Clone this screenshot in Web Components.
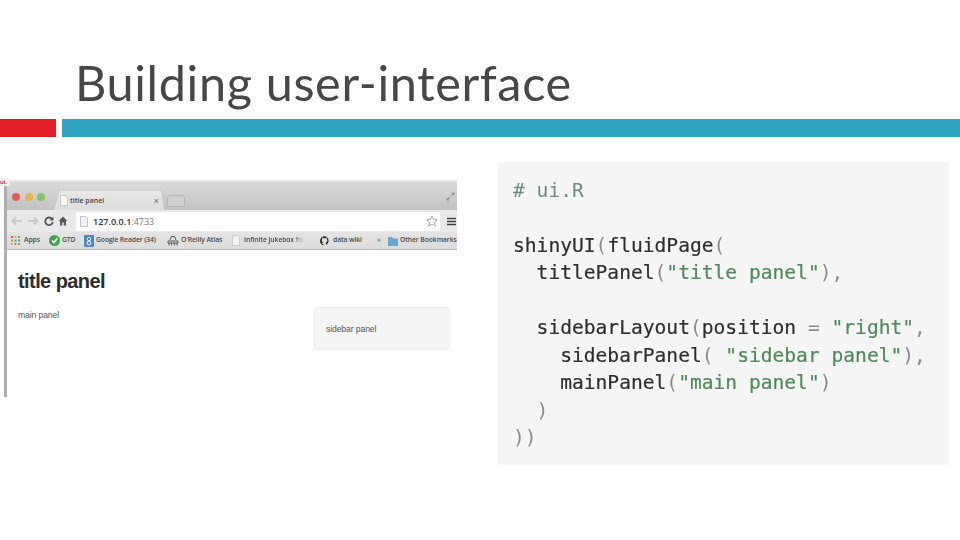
<!DOCTYPE html>
<html><head><meta charset="utf-8"><style>
html,body{margin:0;padding:0;background:#fff;width:960px;height:540px;overflow:hidden}
body{font-family:"Liberation Sans",sans-serif}
</style></head><body>
<slide-deck>
  <slide-title slot="title">Building user-interface</slide-title>
  <accent-bars slot="bars"></accent-bars>
  <browser-shot slot="left"></browser-shot>
  <code-card slot="right"></code-card>
</slide-deck>
<script>
function def(name, html){
  customElements.define(name, class extends HTMLElement{
    constructor(){super();this.attachShadow({mode:'open'}).innerHTML=html;}
  });
}
def('slide-deck',`<style>
:host{display:flex;flex-direction:column;width:960px;height:540px}
.content{display:flex;align-items:flex-start;margin-top:25px}
.l{width:498px;padding-top:18px;flex:none}
</style>
<slot name="title"></slot><slot name="bars"></slot>
<div class="content"><div class="l"><slot name="left"></slot></div><slot name="right"></slot></div>`);

def('slide-title',`<style>
:host{display:block;height:119px;box-sizing:border-box;padding:49px 0 0 75px;
font:400 48.6px/66px Lato,"Open Sans",sans-serif;color:#474747;letter-spacing:.65px;white-space:nowrap}
</style><slot></slot>`);

def('accent-bars',`<style>
:host{display:flex;gap:6px;height:18px}
.r{width:56px;background:#e01f26}.b{flex:1;background:#2fa3bf}
</style><div class="r"></div><div class="b"></div>`);

def('bm-item',`<style>
:host{display:flex;flex:none;align-items:center;gap:2px;box-sizing:border-box;font:600 6.8px/1 "Open Sans",sans-serif;letter-spacing:-.1px;color:#4a4a4a;white-space:nowrap}
::slotted(svg){flex:none}
</style><slot></slot>`);

def('browser-shot',`<style>
:host{display:block;position:relative;width:457px;height:217px;filter:blur(.35px)}
.frame{margin-left:4px;height:100%;border-left:3px solid #aeaeae;display:flex;flex-direction:column;box-sizing:border-box}
.top{height:3px;background:#e6e6e6;border-bottom:1px solid #d2d2d2;box-sizing:border-box}
.tabs{height:27px;background:linear-gradient(#d9d9d9,#c2c2c2);display:flex;align-items:flex-end;position:relative;padding-left:5px;box-sizing:border-box}
.lights{display:flex;gap:4.500px;align-self:flex-start;margin-top:10px}
.lights i{width:8px;height:8px;border-radius:50%;display:block}
.tab{width:110px;height:19px;margin-left:9px;background:linear-gradient(#e8e8e8,#dddddd);clip-path:polygon(0 100%,6px 0,calc(100% - 3px) 0,100% 100%);display:flex;align-items:center;padding:0 5px 0 6px;box-sizing:border-box;font:600 7px "Open Sans",sans-serif;color:#444;gap:2px}
.tab span{flex:1}
.tab b{font:400 9px "Liberation Sans",sans-serif;color:#666}
.new{width:18px;height:12px;margin:0 0 3px 3px;background:#cfcfcf;border:1px solid #b5b5b5;border-radius:3px 3px 0 0;box-sizing:border-box}
.exp{margin-left:auto;align-self:flex-start;margin-top:9px;margin-right:2px}
.bar{height:22px;background:#e9e9e9;display:flex;align-items:center;padding-left:4px;box-sizing:border-box}
.omni{width:364px;height:19px;margin-left:8px;background:#fff;display:flex;align-items:center;padding:0 2px 0 4px;box-sizing:border-box;font:600 9px "Open Sans",sans-serif;color:#333;gap:5px}
.omni em{font-style:normal;color:#777;font-weight:400}
.omni svg:last-child{margin-left:auto}
.ham{margin-left:7px}
.bm{height:18px;background:linear-gradient(#e4e4e4,#dcdcdc);border-bottom:1px solid #b9b9b9;display:flex;align-items:center;padding-left:4px;box-sizing:border-box;overflow:hidden}
.page{flex:1;position:relative;background:#fff}
h1{margin:19px 0 0 11px;font:700 20px/24px "Liberation Sans",sans-serif;letter-spacing:-.58px;color:#2e2e2e}
.row{display:flex;margin-top:14px;align-items:flex-start}
.main{margin:2px 0 0 11px;width:296px;font:400 8.6px/12px "Liberation Sans",sans-serif;color:#555;letter-spacing:-.1px}
.side{width:136px;height:43px;background:#f5f5f5;border:1px solid #eee;border-radius:3px;box-sizing:border-box;display:flex;align-items:center;padding-left:11px;font:400 8.6px "Liberation Sans",sans-serif;color:#555;letter-spacing:-.1px}
.pin{position:absolute;left:0;top:-2px;width:10px;height:8px;font:700 6px/8px "Liberation Sans",sans-serif;color:#c0343a;background:#f4eeee;overflow:hidden}
</style>
<div class="frame">
<div class="top"></div>
<div class="tabs">
 <div class="lights"><i style="background:#e0605a"></i><i style="background:#e8b64a"></i><i style="background:#86c06a"></i></div>
 <div class="tab"><svg width="8" height="11" viewBox="0 0 8 11"><path d="M.5.5h5l2 2v8h-7z" fill="#f7f7f7" stroke="#c8c8c8"/></svg><span>title panel</span><b>×</b></div>
 <div class="new"></div>
 <svg class="exp" width="9" height="9" viewBox="0 0 9 9"><path d="M5 4l3-3M6 1h2v2M4 5L1 8M1 6v2h2" stroke="#8a8a8a" fill="none"/></svg>
</div>
<div class="bar">
 <svg width="12" height="10" viewBox="0 0 12 10"><path d="M11 5H2M5 1.500L1.500 5 5 8.500" stroke="#c8c8c8" stroke-width="2" fill="none"/></svg>
 <svg style="margin-left:4px" width="12" height="10" viewBox="0 0 12 10"><path d="M1 5h9M7 1.500L10.500 5 7 8.500" stroke="#c8c8c8" stroke-width="2" fill="none"/></svg>
 <svg style="margin-left:5px" width="10" height="10" viewBox="0 0 10 10"><path d="M8.300 3.300A3.800 3.800 0 1 0 8.800 6" stroke="#555" stroke-width="1.800" fill="none"/><path d="M9.500.5v4h-4z" fill="#555"/></svg>
 <svg style="margin-left:4px" width="10" height="10" viewBox="0 0 10 10"><path d="M5 .5L.5 5H2v4.500h2.200V6.500h1.600v3H8V5h1.500z" fill="#5a5a5a"/></svg>
 <div class="omni">
  <svg width="8" height="11" viewBox="0 0 8 11"><path d="M.5.5h5l2 2v8h-7z" fill="#f4f4f4" stroke="#c4c4c4"/></svg>
  <span>127.0.0.1<em>:4733</em></span>
  <svg width="12" height="12" viewBox="0 0 12 12"><path d="M6 .8l1.600 3.500 3.700.4-2.800 2.500.8 3.800L6 9.100 2.700 11l.8-3.800L.7 4.700l3.700-.4z" fill="#fff" stroke="#a8a8a8"/></svg>
 </div>
 <svg class="ham" width="9" height="9" viewBox="0 0 9 9"><path d="M0 1.500h9M0 4.500h9M0 7.500h9" stroke="#444" stroke-width="1.600"/></svg>
</div>
<div class="bm">
 <bm-item style="gap:4px;width:38px"><svg width="9" height="9" viewBox="0 0 9 9"><g><rect width="2" height="2" fill="#d55"/><rect x="3.500" width="2" height="2" fill="#da5"/><rect x="7" width="2" height="2" fill="#6a6"/><rect y="3.500" width="2" height="2" fill="#c84"/><rect x="3.500" y="3.500" width="2" height="2" fill="#5a7"/><rect x="7" y="3.500" width="2" height="2" fill="#59c"/><rect y="7" width="2" height="2" fill="#bb5"/><rect x="3.500" y="7" width="2" height="2" fill="#d66"/><rect x="7" y="7" width="2" height="2" fill="#7a5"/></g></svg>Apps</bm-item>
 <bm-item style="width:35px"><svg width="11" height="11" viewBox="0 0 11 11"><circle cx="5.500" cy="5.500" r="5.500" fill="#3da84a"/><path d="M3 5.500l2 2 3.200-4" stroke="#fff" stroke-width="1.600" fill="none"/></svg>GTD</bm-item>
 <bm-item style="width:83px"><svg width="10" height="12" viewBox="0 0 10 12"><rect width="10" height="12" rx="1" fill="#4a86d8"/><circle cx="5" cy="4" r="1.700" fill="none" stroke="#fff"/><circle cx="5" cy="8" r="1.900" fill="none" stroke="#fff"/></svg>Google Reader (34)</bm-item>
 <bm-item style="width:65px"><svg width="12" height="10" viewBox="0 0 12 10"><path d="M3 4l1.500-3.500h3L9 4M1 5h10v2H1zM2 7v2.500M4.500 7v2.500M7.500 7v2.500M10 7v2.500" stroke="#555" stroke-width="1" fill="none"/></svg>O'Reilly Atlas</bm-item>
 <bm-item style="gap:4px;width:88px"><svg width="8" height="11" viewBox="0 0 8 11"><path d="M.5.5h5l2 2v8h-7z" fill="#f4f4f4" stroke="#ccc"/></svg><span style="-webkit-mask-image:linear-gradient(90deg,#000 80%,transparent)">Infinite Jukebox for</span></bm-item>
 <bm-item style="gap:3px;width:57px"><svg width="10" height="10" viewBox="0 0 10 10"><path d="M5 .3a4.700 4.700 0 0 0-1.500 9.200V8c-1.300.3-1.700-.6-1.900-1 .8.500 1.300 0 1.900-.3-1-.3-1.700-1-1.700-2.300 0-.6.200-1.100.5-1.500-.1-.4-.1-.9.100-1.300.5 0 1 .3 1.400.6a5 5 0 0 1 1.500 0c.4-.3.900-.6 1.400-.6.200.4.200.9.100 1.300.3.400.5.900.5 1.500 0 1.300-.7 2-1.700 2.300.3.300.5.700.5 1.200v1.100A4.700 4.700 0 0 0 5 .3z" fill="#222"/></svg>data wiki</bm-item>
 <bm-item style="width:11px;color:#777">»</bm-item>
 <bm-item style="width:67px"><svg width="10" height="10" viewBox="0 0 10 10"><path d="M0 1h4l1 1.500h5V10H0z" fill="#6ea3d2"/></svg>Other Bookmarks</bm-item>
</div>
<div class="page">
 <h1>title panel</h1>
 <div class="row"><div class="main">main panel</div><div class="side">sidebar panel</div></div>
</div>
</div>
<div class="pin">ui.</div>`);

def('code-card',`<style>
:host{display:block;flex:none;width:451px;height:303px;box-sizing:border-box;background:#f5f5f5;padding:15px 0 0 15px;filter:blur(.3px)}
pre{margin:0;font:400 19.6px/27.45px "DejaVu Sans Mono",monospace;color:#3a3a3a;-webkit-text-stroke:.2px currentColor}
.c{color:#6f8c84;-webkit-text-stroke:0}.p{color:#8b8b8b;-webkit-text-stroke:0}.s{color:#4f8a5c}.k{color:#2f2f2f}
</style><pre><span class="c"># ui.R</span>

<span class="k">shinyUI</span><span class="p">(</span><span class="k">fluidPage</span><span class="p">(</span>
  <span class="k">titlePanel</span><span class="p">(</span><span class="s">"title panel"</span><span class="p">),</span>

  <span class="k">sidebarLayout</span><span class="p">(</span><span class="k">position</span> <span class="p">=</span> <span class="s">"right"</span><span class="p">,</span>
    <span class="k">sidebarPanel</span><span class="p">(</span> <span class="s">"sidebar panel"</span><span class="p">),</span>
    <span class="k">mainPanel</span><span class="p">(</span><span class="s">"main panel"</span><span class="p">)</span>
  <span class="p">)</span>
<span class="p">))</span></pre>`);
</script>
</body></html>
